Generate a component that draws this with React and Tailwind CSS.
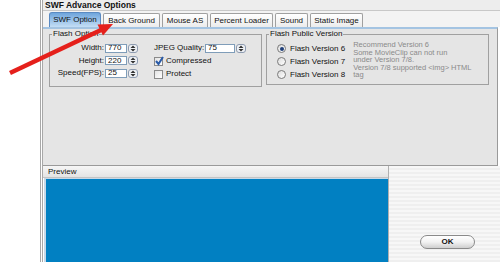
import React from "react";

const tabs = [
  ["SWF Option", "w-[52px]"],
  ["Back Ground", "w-[57px]"],
  ["Mouse AS", "w-[46px]"],
  ["Percent Loader", "w-[63px]"],
  ["Sound", "w-[33px]"],
  ["Static Image", "w-[53px]"],
];

const Spinner = () => (
  <div className="flex h-[9px] w-[10px] items-center justify-center rounded-[3px] border border-[#8d9bb0] bg-[#eef1f5]">
    <svg width="6" height="7" viewBox="0 0 6 7">
      <path d="M3 0.5 L5.5 3 L0.5 3 Z M3 6.5 L5.5 4 L0.5 4 Z" fill="#333" />
    </svg>
  </div>
);

const NumField = ({ value, w = "w-[22px]" }) => (
  <div className="flex items-center gap-[1px]">
    <div className={`flex h-[9px] ${w} items-center border border-[#7f9db9] bg-white pl-[2px] text-[8px] leading-none`}>{value}</div>
    <Spinner />
  </div>
);

const Check = ({ checked, label }) => (
  <div className="flex h-[13px] items-center gap-[3px]">
    <div className="relative h-[9px] w-[9px] border border-[#8a8a8a] bg-gradient-to-br from-[#e2e2e2] to-white">
      {checked && (
        <svg className="absolute left-[0px] top-[-2px]" width="9" height="10" viewBox="0 0 9 10">
          <path d="M1 5 L3.5 8 L8 1" stroke="#2a5ba8" strokeWidth="2" fill="none" />
        </svg>
      )}
    </div>
    <span>{label}</span>
  </div>
);

const Radio = ({ checked, label }) => (
  <div className="flex h-[13px] items-center gap-[4px]">
    <div className="flex h-[9px] w-[9px] items-center justify-center rounded-full border border-[#7a7a7a] bg-gradient-to-br from-[#dcdcdc] to-white">
      {checked && <div className="h-[4px] w-[4px] rounded-full bg-[#1f3f7a]" />}
    </div>
    <span className="whitespace-nowrap text-[8px]">{label}</span>
  </div>
);

export default function App() {
  return (
    <div className="relative flex h-[262px] w-[500px] overflow-hidden bg-white font-['Liberation_Sans',sans-serif] text-[8px] text-[#111]">
      <div className="w-[40px] shrink-0 bg-white" />
      <div className="flex flex-1 flex-col border-l-[3px] border-double border-[#a8a8a8]">
        <div className="flex h-[11px] items-center border-b border-[#c8c8c8] bg-[#ededed] pl-[2px] text-[8.5px] font-bold leading-none">
          SWF Advance Options
        </div>
        <div className="flex h-[16px] items-end gap-[2px] bg-[#f3f3f3] pl-[6px]">
          {tabs.map(([t, w], i) => (
            <div
              key={t}
              className={
                i === 0
                  ? `flex h-[15px] ${w} items-center justify-center whitespace-nowrap rounded-t-[3px] border border-b-0 border-[#5a8ac2] bg-gradient-to-b from-[#6ea5dc] to-[#c4def5] text-[8px]`
                  : `flex h-[14px] ${w} items-center justify-center whitespace-nowrap rounded-t-[2px] border border-b-0 border-[#a0a0a0] bg-gradient-to-b from-white to-[#ececec] text-[8px]`
              }
            >
              {t}
            </div>
          ))}
        </div>
        <div className="mr-[2px] flex h-[139px] gap-[4px] border-t-[2px] border-r border-b border-[#a4c4e2] border-r-[#9a9a9a] border-b-[#9a9a9a] bg-[#e5e5e5] pl-[6px] pt-[5px]">
          <div className="relative h-[53px] w-[213px] border border-[#a0a0a0]">
            <span className="absolute left-[2px] top-[-5px] bg-[#e5e5e5] px-[1px] leading-none">Flash Option</span>
            <div className="flex gap-[16px] pt-[7px]">
              <div className="flex flex-col">
                {[["Width:", "770"], ["Height:", "220"], ["Speed(FPS):", "25"]].map(([l, v]) => (
                  <div key={l} className="flex h-[12.5px] items-center">
                    <span className="w-[55px] pr-[1px] text-right">{l}</span>
                    <NumField value={v} />
                  </div>
                ))}
              </div>
              <div className="flex flex-col">
                <div className="flex h-[12.5px] items-center gap-[3px]">
                  <span className="w-[48px] whitespace-nowrap">JPEG Quality:</span>
                  <NumField value="75" w="w-[30px]" />
                </div>
                <Check checked label="Compressed" />
                <Check label="Protect" />
              </div>
            </div>
          </div>
          <div className="relative h-[51px] w-[223px] border border-[#a0a0a0]">
            <span className="absolute left-[2px] top-[-5px] bg-[#e5e5e5] px-[1px] leading-none">Flash Public Version</span>
            <div className="flex gap-[8px] pl-[10px] pt-[6px]">
              <div className="flex flex-col pt-[1px]">
                <Radio checked label="Flash Version 6" />
                <Radio label="Flash Version 7" />
                <Radio label="Flash Version 8" />
              </div>
              <div className="text-[7.5px] leading-[7.5px] text-[#8a8a8a]">
                <div>Recommend Version 6</div>
                <div>Some MovieClip can not run</div>
                <div>under Version 7/8.</div>
                <div>Version 7/8 supported &lt;img&gt; HTML</div>
                <div>tag</div>
              </div>
            </div>
          </div>
        </div>
        <div className="flex flex-1">
          <div className="flex w-[346px] flex-col border-r border-[#b0b0b0]">
            <div className="flex h-[12px] items-center border-b border-[#c4c4c4] bg-gradient-to-b from-[#f6f6f6] to-[#e4e4e4] pl-[5px]">
              Preview
            </div>
            <div className="ml-[1px] flex-1 border-l-[2px] border-t border-[#c8d8e6] bg-[#0180c2]" />
          </div>
          <div className="flex flex-1 flex-col items-start bg-[repeating-linear-gradient(0deg,#efefef_0px,#efefef_2px,#f7f7f7_2px,#f7f7f7_4px)] pl-[31px] pt-[69px]">
            <div className="flex h-[14px] w-[55px] items-center justify-center rounded-full border border-[#8a8a8a] bg-gradient-to-b from-white via-[#f2f2f2] to-[#cfcfcf] text-[8px] font-bold">
              OK
            </div>
          </div>
        </div>
      </div>
      <svg className="pointer-events-none absolute left-0 top-0" width="500" height="262">
        <line x1="10" y1="73" x2="101" y2="30" stroke="#e5201b" strokeWidth="4.5" />
        <polygon points="113,24 103,35.5 97.5,24.5" fill="#e5201b" />
      </svg>
    </div>
  );
}
